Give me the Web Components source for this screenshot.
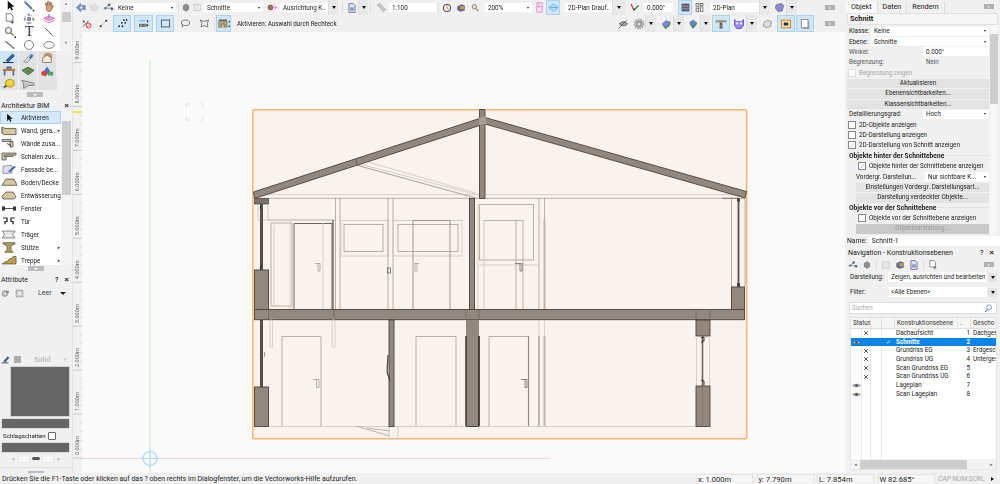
<!DOCTYPE html>
<html lang="de">
<head>
<meta charset="utf-8">
<title>Vectorworks</title>
<style>
    html, body { margin: 0; height: 484px; overflow: hidden; background: #f0f0f0; }
    body { font: 6.3px Roboto, "Liberation Sans", sans-serif; color: #222; }
</style>
</head>
<body>
<vw-app></vw-app>
<script>
// small toolbar / palette pictures, all on a 16x16 box
const ICONS = {
    cursor: '<path d="M5 1v12l3-3 2 4 2-1-2-4h4z" fill="#111"/>',
    wand: '<path d="M2 2l10 10" stroke="#5a7f9a" stroke-width="3"/><path d="M2 1l2 2" stroke="#9cd" stroke-width="3"/><rect x="13" y="13" width="2" height="2" fill="#111"/>',
    hand: '<path d="M4 8l-1-4 2 0 1 3 0-5 2 0 1 5 1-4 2 1-1 5 2-2 1 1-3 6-3 2-3-2z" fill="#d8a070" stroke="#74513a" stroke-width=".8"/>',
    docplus: '<path d="M3 1h6l3 3v7H3z" fill="#fff" stroke="#555"/><path d="M11 10v5M8.500 12.500h5" stroke="#444"/>',
    sphere: '<circle cx="8" cy="8" r="3" fill="#7c8ba0"/><path d="M8 1v3M8 12v3M1 8h3M12 8h3" stroke="#556" stroke-width="1.500"/><circle cx="8" cy="8" r="6" fill="none" stroke="#778" stroke-dasharray="3 2"/>',
    pinkstack: '<path d="M1 7l7-3 7 3-7 3z" fill="#f6a6d8" stroke="#e050b0"/><path d="M1 10l7 3 7-3" fill="none" stroke="#e050b0"/><path d="M8 1v6" stroke="#3a9" stroke-width="1.500"/>',
    mag: '<circle cx="6" cy="6" r="4" fill="#eee" stroke="#777" stroke-width="1.500"/><path d="M9 9l4 4" stroke="#a08040" stroke-width="2"/><rect x="14" y="14" width="2" height="2" fill="#111"/>',
    line: '<path d="M3 3l10 10" stroke="#555" stroke-width="1.200"/>',
    dline: '<path d="M2 3l12 10" stroke="#777" stroke-width="2"/>',
    circle: '<circle cx="8" cy="8" r="6" fill="none" stroke="#555"/>',
    ellipse: '<ellipse cx="8" cy="8" rx="7" ry="4.500" fill="none" stroke="#555"/>',
    pen: '<path d="M1 14h12" stroke="#234" stroke-width="1.500"/><path d="M5 11l7-8 2 2-7 8z" fill="#2a6fd0" stroke="#123"/>',
    eraser: '<path d="M3 13L11 3l3 2-7 9z" fill="#ddd" stroke="#888"/><path d="M9 8l3-5 2 1-3 5z" fill="#2a6fd0"/>',
    house: '<circle cx="9" cy="6" r="5" fill="#c8955c"/><path d="M3 8l5-4 5 4v6H3z" fill="#f2ead8" stroke="#777"/>',
    table: '<path d="M1 5h14v3H1z" fill="#b87840"/><path d="M3 8v6M13 8v6" stroke="#4a6fa8" stroke-width="2"/><rect x="5" y="2" width="6" height="3" fill="#4a6fa8"/>',
    plants: '<path d="M1 7l7-4 7 4-7 6z" fill="#5c9a50" stroke="#365"/><path d="M5 5l6 6M9 4l3 4" stroke="#b04030"/>',
    shapes: '<path d="M8 2l5 9H3z" fill="#3a70d0"/><circle cx="5" cy="11" r="3.500" fill="#d04040"/><rect x="9" y="9" width="6" height="5" fill="#40a860"/>',
    bulb: '<ellipse cx="9" cy="7" rx="5" ry="5" fill="#f4d030" stroke="#96801c"/><path d="M5 10l-3 3" stroke="#666" stroke-width="2.500"/>',
    beam: '<path d="M1 3l14 4v3H8l-5 4V8z" fill="#c8c8c8" stroke="#777"/>',
    back: '<path d="M8 2L2 8l6 6 1-3h6V5H9z" fill="#7c8ed0" stroke="#6070a8" stroke-width=".8"/><circle cx="9" cy="8" r="2" fill="#dde"/>',
    fwd: '<path d="M8 2l6 6-6 6-1-3H2V5h5z" fill="#e2e2e2" stroke="#ccc"/>',
    classes: '<circle cx="3" cy="9" r="1.800" fill="#789"/><circle cx="9" cy="4" r="2" fill="#567"/><circle cx="13" cy="10" r="2" fill="#567"/><path d="M3 9l6-5M3 9h10" stroke="#567"/>',
    hex: '<path d="M8 2l5 3v6l-5 3-5-3V5z" fill="#8c8c8c"/>',
    box: '<rect x="2" y="3" width="11" height="10" fill="#e9e9e9" stroke="#bbb"/>',
    align: '<circle cx="5" cy="8" r="3.500" fill="#a87850" stroke="#543"/><path d="M8 8h7M9 4l5 4-5 4" fill="none" stroke="#f070c0"/>',
    doc: '<path d="M3 1h7l3 3v11H3z" fill="#dfe3f6" stroke="#445"/><rect x="5" y="7" width="6" height="5" fill="#8890d8"/>',
    ruler: '<path d="M2 4l3-2 9 9-3 3z" fill="#ccc" stroke="#999"/>',
    clock: '<circle cx="8" cy="8" r="6" fill="#eee" stroke="#333" stroke-width="1.400"/><path d="M8 4v4l3 2" stroke="#a06020" fill="none"/>',
    views: '<path d="M2 5l7-3 5 2v8l-7 2-5-3z" fill="#606a90"/><path d="M7 5h6v5H7z" fill="#c8a040"/>',
    zoom: '<circle cx="7" cy="6" r="3.500" fill="#ddd" stroke="#777" stroke-width="1.300"/><path d="M9.500 9l4 4" stroke="#a08040" stroke-width="2"/>',
    pinkbox: '<path d="M4 1h8v14H4z" fill="#fbe8f6" stroke="#ec68c8"/><path d="M4 7h8M7 1v6" stroke="#ec68c8"/>',
    bluelayer: '<path d="M1 8l7-5 7 5-7 5z" fill="#b8e0f8" stroke="#40a0e0"/><path d="M3 8h10" stroke="#40a0e0"/>',
    axes: '<path d="M3 3l4 9" stroke="#d03030" stroke-width="1.600"/><path d="M7 12l7-7" stroke="#207020" stroke-width="1.600"/><path d="M7 12V9" stroke="#3040c0" stroke-width="1.600"/>',
    grid2: '<rect x="3" y="3" width="10" height="10" fill="#667" stroke="#334"/><path d="M3 6h10M3 10h10" stroke="#aab"/>',
    layout: '<rect x="3" y="2" width="4" height="5" fill="#eee" stroke="#555"/><rect x="9" y="2" width="4" height="3" fill="#eee" stroke="#555"/><rect x="3" y="9" width="4" height="5" fill="#eee" stroke="#555"/><rect x="9" y="7" width="4" height="7" fill="#eee" stroke="#555"/>',
    shield: '<path d="M3 4l8-2 3 3-2 8-6 1-4-5z" fill="#8a8ad8" stroke="#667"/>',
    snapx: '<path d="M3 12L8 7l3-3" stroke="#555" stroke-width="1.400"/><circle cx="4" cy="5" r="1.500" fill="#444"/><circle cx="11" cy="11" r="3.500" fill="none" stroke="#d03030" stroke-width="1.300"/><path d="M9 13l4-4" stroke="#d03030"/>',
    snap2: '<circle cx="4" cy="12" r="1.500" fill="#222"/><circle cx="12" cy="4" r="1.500" fill="#222"/><path d="M4 12l8-8" stroke="#777" stroke-dasharray="2 1"/>',
    snap3: '<g fill="#222"><circle cx="3" cy="12" r="1.300"/><circle cx="8" cy="12" r="1.300"/><circle cx="7" cy="7" r="1.300"/><circle cx="12" cy="7" r="1.300"/><circle cx="10" cy="3" r="1.300"/><circle cx="14" cy="3" r="1.300"/></g>',
    snap4: '<path d="M2 4h9M2 12h9" stroke="#3a8fd0"/><rect x="2" y="9" width="5" height="3" fill="#b8a068" stroke="#555"/><rect x="8" y="9" width="4" height="3" fill="#b8a068" stroke="#555"/><path d="M14 3v3M14 9v3" stroke="#222" stroke-width="1.500"/>',
    rect: '<rect x="2" y="3" width="12" height="10" fill="none" stroke="#444" stroke-width="1.200"/>',
    lasso: '<ellipse cx="8" cy="7" rx="6" ry="4" fill="none" stroke="#444"/><path d="M4 10l-1 4" stroke="#444"/>',
    poly: '<path d="M2 3l5 2 7-2-2 5 1 5-6-2-4 2 1-5z" fill="none" stroke="#444"/>',
    section: '<path d="M1 13V5h11v8M4 13V8h5v5" fill="#c8b080" stroke="#665"/><path d="M1 3h11" stroke="#665" stroke-width="2"/><path d="M15 4v2M15 10v2" stroke="#222" stroke-width="1.500"/>',
    hiddenline: '<path d="M2 14L13 3M3 8c3-4 8-4 11 0-3 3-8 3-11 0z" fill="#aaa" stroke="#444"/>',
    gear: '<circle cx="8" cy="8" r="5" fill="#999"/><circle cx="8" cy="8" r="6.300" fill="none" stroke="#999" stroke-width="1.800" stroke-dasharray="2 1.400"/><circle cx="8" cy="8" r="2" fill="#ddd"/>',
    shieldg: '<path d="M2 8l6-5 6 2-1 6-6 3z" fill="#7b86d8"/><path d="M5 11l3 3 6-8" fill="none" stroke="#3a9a3a" stroke-width="1.500"/>',
    gem: '<path d="M3 6l5-4 5 4-1 3-4 5-4-5z" fill="#6a7fd0"/><path d="M6 10l2 3 5-6" fill="none" stroke="#2f9a3a" stroke-width="1.600"/>',
    figure: '<rect x="1" y="3" width="14" height="3" fill="#a89060"/><circle cx="8" cy="8" r="2" fill="#555"/><path d="M6 14v-4h4v4" fill="#666"/>',
    owl: '<path d="M2 2l3 3h6l3-3v8l-3 4H5l-3-4z" fill="#9a8cf0" stroke="#5040d0"/><circle cx="5.500" cy="7" r="1.500" fill="#fff"/><circle cx="10.500" cy="7" r="1.500" fill="#fff"/>',
    teapot: '<path d="M3 11l1-5 5-3 5 2-1 6-5 2z" fill="#ddd" stroke="#888"/>',
    shot: '<rect x="2" y="3" width="12" height="10" fill="#f4e8c8" stroke="#d89020" stroke-width="1.500"/><rect x="5" y="6" width="6" height="4" fill="#333"/>',
    page: '<rect x="3" y="2" width="9" height="11" fill="#fff" stroke="#777"/><path d="M13 4v10H5" fill="none" stroke="#999" stroke-width="1.500"/>',
    eye: '<path d="M1 8c3-4 11-4 14 0-3 4-11 4-14 0z" fill="#cfd6d8" stroke="#445"/><circle cx="8" cy="8" r="2.500" fill="#334"/>',
    cross: '<path d="M3 3l10 10M13 3L3 13" stroke="#222" stroke-width="2"/>',
    check: '<path d="M3 9l3 4 7-10" fill="none" stroke="#8ac" stroke-width="1.500"/>',
    search: '<circle cx="9" cy="6" r="4.500" fill="none" stroke="#4a80c0" stroke-width="1.300"/><path d="M6 10l-4 4" stroke="#4a80c0" stroke-width="1.800"/>',
    attrs: '<circle cx="7" cy="8" r="5" fill="#ccc" stroke="#555"/><rect x="9" y="3" width="5" height="4" fill="#888"/>',
    square: '<rect x="2" y="2" width="12" height="12" fill="#f4f4f4" stroke="#666"/><rect x="5" y="5" width="6" height="6" fill="none" stroke="#999"/>',
    wall: '<path d="M1 3l3 2h11v9H3L1 12z" fill="#d8c79c" stroke="#555"/><path d="M1 3v9" stroke="#777"/>',
    walladd: '<path d="M1 2h9v3H1z" fill="#ccc" stroke="#555"/><path d="M9 5h3v8H9z" fill="#d8c79c" stroke="#555"/><path d="M6 8l4 3" stroke="#222"/>',
    shell: '<path d="M1 3h14v3H5v7H1z" fill="#d8c79c" stroke="#555"/><path d="M3 6h9v2H3z" fill="#fff" stroke="#555"/>',
    facade: '<path d="M2 3l9-1v11l-9 1z" fill="#dfe0f8" stroke="#888"/><path d="M7 11l6-8 2 1-6 8z" fill="#3a5fd0"/>',
    slab: '<path d="M5 3h8l3 9H1z" fill="#d8c79c" stroke="#555"/>',
    drain: '<path d="M5 3h7l3 7-2 3H2l-1-4z" fill="#d8c79c" stroke="#555"/>',
    window: '<rect x="1" y="5" width="3" height="6" fill="#333"/><rect x="12" y="5" width="3" height="6" fill="#333"/><path d="M4 8h8" stroke="#333"/>',
    door: '<path d="M2 3h4v5H4v4M14 3h-4v5h2v4" fill="none" stroke="#333" stroke-width="1.400"/>',
    girder: '<path d="M1 3h13v1l-2 2v4l2 2v1H1l2-3V6z" fill="#e8e8e8" stroke="#777"/>',
    column: '<path d="M2 1h12v2l-4 2v7l2 2v1H4v-1l2-2V5L2 3z" fill="#b89a50" stroke="#665"/>',
    stair: '<path d="M1 13l3-3 3-1 1-3 3-1 1-3h3v11z" fill="#c0a040" stroke="#654"/>'
};

function icon(name, size, w) {
    return `<svg width="${w || size}" height="${size}" viewBox="0 0 16 16" preserveAspectRatio="none" style="display:block">${ICONS[name]}</svg>`;
}

// one toolbar cell: w is the width of the cell, the icon sits in the middle
class VwTool extends HTMLElement {
    connectedCallback() {
        const w = this.getAttribute('w') || 14;
        const size = this.getAttribute('size') || 11;
        this.attachShadow({ mode: 'open' });
        this.shadowRoot.innerHTML = `
            <style>
                :host { display: flex; align-items: center; justify-content: center; width: ${w}px; height: 100%; box-sizing: border-box; flex: none; }
                :host([on]) { background: #cfe6f7; border: 1px solid #a9d3f1; }
                :host([drop]) { background: #e8e8e8; border-left: 1px solid #ddd; }
                i { width: 0; height: 0; border: 2px solid transparent; border-top: 3px solid #111; border-bottom: 0; }
            </style>
            ${this.hasAttribute('drop') ? '<i></i>' : icon(this.getAttribute('name'), size)}`;
    }
}

class VwCombo extends HTMLElement {
    connectedCallback() {
        const w = this.getAttribute('w');
        const inner = this.hasAttribute('inner');
        this.attachShadow({ mode: 'open' });
        this.shadowRoot.innerHTML = `
            <style>
                :host { display: flex; align-items: center; flex: none; box-sizing: border-box; width: ${w ? w + 'px' : 'auto'}; height: 9px; background: #fff; padding: 0 2px 0 3px; white-space: nowrap; overflow: hidden; }
                span { flex: 1; overflow: hidden; }
                i { width: 0; height: 0; border: 1.500px solid transparent; border-top: 2px solid #222; border-bottom: 0; margin-right: 1px; }
            </style>
            <span><slot></slot></span>${inner ? '<i></i>' : ''}`;
    }
}

class VwGap extends HTMLElement {
    connectedCallback() {
        this.attachShadow({ mode: 'open' });
        this.shadowRoot.innerHTML = `
            <style>
                :host { display: block; flex: none; width: ${this.getAttribute('w') || 1}px; height: 100%; }
                b { display: block; width: 1px; margin: 2px auto; height: calc(100% - 4px); background: #dcdcdc; }
            </style>
            ${this.hasAttribute('sep') ? '<b></b>' : ''}`;
    }
}

class VwMore extends HTMLElement {
    connectedCallback() {
        this.attachShadow({ mode: 'open' });
        this.shadowRoot.innerHTML = `
            <style>
                :host { display: flex; align-items: center; justify-content: center; flex: none; width: 10px; height: 5px; background: #b0b0b0; }
                i { width: 0; height: 0; border: 1.500px solid transparent; border-left: 2px solid #fff; border-right: 0; }
            </style><i></i>`;
    }
}

class VwToolbar extends HTMLElement {
    connectedCallback() {
        this.attachShadow({ mode: 'open' });
        this.shadowRoot.innerHTML = `
            <style>
                :host { display: flex; align-items: center; height: ${this.getAttribute('h') || 15}px; background: #f0f0f0; flex: none; }
            </style>
            <slot></slot>`;
    }
}

class VwTitle extends HTMLElement {
    connectedCallback() {
        this.attachShadow({ mode: 'open' });
        this.shadowRoot.innerHTML = `
            <style>
                :host { display: flex; align-items: center; height: 11px; padding: 0 3px 0 1px; background: #f0f0f0; font-size: 7px; flex: none; white-space: nowrap; }
                span { flex: 1; }
                b { font: bold 8px "Liberation Sans", sans-serif; margin-left: 6px; }
                u { text-decoration: none; font-size: 7px; font-weight: 500; }
            </style>
            <span><slot></slot></span>${this.hasAttribute('help') ? '<u>?</u>' : ''}<b>×</b>`;
    }
}

class VwCheck extends HTMLElement {
    connectedCallback() {
        this.attachShadow({ mode: 'open' });
        this.shadowRoot.innerHTML = `
            <style>
                :host { display: flex; align-items: center; gap: 3px; white-space: nowrap; }
                :host([off]) { color: #a8a8a8; }
                i { width: 6px; height: 6px; background: #fff; border: 1px solid #888; display: block; flex: none; line-height: 0; }
                :host([off]) i { border-color: #ddd; }
                svg { display: block; }
            </style>
            <i>${this.hasAttribute('checked') ? icon('check', 6) : ''}</i><span><slot></slot></span>`;
    }
}

class VwPButton extends HTMLElement {
    connectedCallback() {
        this.attachShadow({ mode: 'open' });
        this.shadowRoot.innerHTML = `
            <style>
                :host { display: block; height: 9.400px; line-height: 9.400px; text-align: center; background: #e3e3e3; margin-top: 1px; white-space: nowrap; }
                :host([off]) { background: #c9c9c9; color: #999; }
            </style>
            <slot></slot>`;
    }
}

// left column: tools, sets, architecture list and attributes
class VwPalette extends HTMLElement {
    connectedCallback() {
        const tools = ['cursor', 'wand', 'hand', 'docplus', 'sphere', 'pinkstack', 'mag', 'T', 'line', 'dline', 'circle', 'ellipse'];
        const sets = ['pen', 'eraser', 'house', 'table', 'plants', 'shapes', 'bulb', 'beam'];
        this.attachShadow({ mode: 'open' });
        this.shadowRoot.innerHTML = `
            <style>
                :host { display: flex; height: 100px; flex: none; flex-direction: column; background: #f0f0f0; }
                .top { display: flex; height: 51px; flex: none; background: #fff; overflow: hidden; }
                .tools { width: 60px; display: grid; grid-template-columns: repeat(3, 19.500px); grid-auto-rows: 13px; margin-top: -1px; }
                .tools div { display: flex; align-items: center; justify-content: center; }
                .tools b { font: 14px/13px "Liberation Serif", serif; color: #333; }
                .scroll { width: 12px; background: #f2f2f2; display: flex; flex-direction: column; align-items: center; }
                .thumb { width: 9px; height: 10px; background: #cdcdcd; margin: 6px 0 17px; }
                .ar { font-size: 4px; line-height: 4px; color: #777; margin-top: 2px; }
                .sets { display: grid; grid-template-columns: repeat(3, 19px); grid-auto-rows: 13px; background: #e2e2e2; height: 39px; flex: none; width: 57px; }
                .sets div { display: flex; align-items: center; justify-content: center; border-right: 1px solid #f0f0f0; box-sizing: border-box; }
                .sets div:first-child { background: #cfe6f7; }
                .down { display: flex; justify-content: center; width: 70px; margin-top: 2px; }
                .down i { display: flex; justify-content: center; align-items: center; width: 16px; height: 5px; background: #bcbcbc; }
                .down i::after { content: ''; border: 2px solid transparent; border-top: 2px solid #fff; border-bottom: 0; }
            </style>
            <div class="top">
                <div class="tools">${tools.map(t => `<div>${t === 'T' ? '<b>T</b>' : icon(t, 12)}</div>`).join('')}</div>
                <div class="scroll"><span class="ar">▲</span><div class="thumb"></div><span class="ar">▼</span></div>
            </div>
            <div class="sets">${sets.map(s => `<div>${icon(s, 12, 14)}</div>`).join('')}</div>
            <div class="down"><i></i></div>`;
    }
}

class VwToolList extends HTMLElement {
    connectedCallback() {
        const items = [['cursor', 'Aktivieren'], ['wall', 'Wand, gera...', 1], ['walladd', 'Wände zusa...'], ['shell', 'Schalen zus...'],
            ['facade', 'Fassade be...'], ['slab', 'Boden/Decke'], ['drain', 'Entwässerung'], ['window', 'Fenster'], ['door', 'Tür'],
            ['girder', 'Träger'], ['column', 'Stütze', 1], ['stair', 'Treppe', 1]];
        this.attachShadow({ mode: 'open' });
        this.shadowRoot.innerHTML = `
            <style>
                :host { display: flex; flex: none; flex-direction: column; height: 173px; background: #f0f0f0; }
                .body { display: flex; height: 154px; flex: none; overflow: hidden; background: #fff; }
                .list { width: 61px; flex: none; }
                .row { display: flex; align-items: center; height: 13px; white-space: nowrap; position: relative; box-sizing: border-box; }
                .row svg { margin: 0 4px 0 1px; flex: none; }
                .row:first-child { background: #d4eafa; outline: 1px solid #a9d3f1; outline-offset: -1px; }
                .row:first-child svg { margin-left: 4px; margin-right: 7px; }
                .row em { position: absolute; right: 0; font-style: normal; font-size: 4px; }
                .scroll { flex: 1; background: #f4f4f4; padding-top: 10px; }
                .thumb { width: 9px; height: 74px; background: #cdcdcd; margin-left: 1px; }
                .down { display: flex; justify-content: center; margin-top: 1px; width: 72px; }
                .down i { display: flex; justify-content: center; align-items: center; width: 16px; height: 5px; background: #bcbcbc; }
                .down i::after { content: ''; border: 2px solid transparent; border-top: 2px solid #fff; border-bottom: 0; }
            </style>
            <vw-title>Architektur BIM</vw-title>
            <div class="body">
                <div class="list">${items.map(([ic, label, more], n) => `<div class="row">${n ? icon(ic, 11, 16) : icon(ic, 10)}<span>${label}</span>${more ? '<em>►</em>' : ''}</div>`).join('')}</div>
                <div class="scroll"><div class="thumb"></div></div>
            </div>
            <div class="down"><i></i></div>`;
    }
}

class VwAttributes extends HTMLElement {
    connectedCallback() {
        this.attachShadow({ mode: 'open' });
        this.shadowRoot.innerHTML = `
            <style>
                :host { display: flex; flex-direction: column; flex: 1; min-height: 0; background: #f0f0f0; padding-top: 1px; }
                .fill { display: flex; align-items: center; height: 12px; flex: none; margin-top: 2px; padding-left: 1px; gap: 5px; }
                .fill span { margin-left: 9px; font-size: 7px; color: #444; flex: 1; }
                .fill i { border: 3px solid transparent; border-top: 3px solid #222; border-bottom: 0; margin-right: 6px; }
                .solid { display: flex; flex: none; align-items: center; height: 10px; margin-top: 55px; padding-left: 1px; gap: 4px; color: #bbb; font-weight: 700; font-size: 7.300px; }
                .solid b { width: 7px; height: 7px; background: #aaa; }
                .solid span { margin-left: 9px; flex: 1; }
                .solid em { font-size: 4px; margin-right: 5px; font-style: normal; }
                .hatch { height: 49px; width: 58px; flex: none; background: #666; margin: 3px 0 0 11px; outline: 1px solid #d0d0d0; }
                .bar { height: 9px; width: 67px; flex: none; background: #666; margin: 3px 0 0 2px; outline: 1px solid #ddd; }
                .shadow { display: flex; flex: none; align-items: center; gap: 2px; padding-left: 3px; height: 11px; margin-top: 2px; font-size: 6.200px; white-space: nowrap; }
                .shadow i { width: 6px; height: 6px; background: #fff; border: 1px solid #666; border-radius: 1px; }
                .link { display: flex; flex: none; justify-content: center; align-items: center; height: 9px; margin-top: 2px; gap: 2px; color: #bbb; font-size: 5px; }
                .link u { width: 12px; height: 9px; background: #f6f6f6; border: 1px solid #e6e6e6; box-sizing: border-box; }
                .link b { width: 8px; height: 3px; border-radius: 2px; background: #555; }
                .down { display: flex; flex: none; justify-content: center; margin-top: 4px; border-top: 1px solid #e0e0e0; padding-top: 3px; }
                .down i { display: flex; justify-content: center; align-items: center; width: 16px; height: 5px; background: #bcbcbc; }
                .down i::after { content: ''; border: 2px solid transparent; border-top: 2px solid #fff; border-bottom: 0; }
            </style>
            <vw-title help>Attribute</vw-title>
            <div class="fill">${icon('attrs', 9)}${icon('square', 9)}<span>Leer</span><i></i></div>
            <div class="solid">${icon('pen', 9)}<b></b><span>Solid</span><em>▼</em></div>
            <div class="hatch"></div>
            <div class="bar"></div>
            <div class="shadow">Schlagschatten <i></i></div>
            <div class="bar" style="margin-top:2px"></div>
            <div class="link"><span>▼</span><u></u><b></b><u></u><span>▼</span></div>
            <div class="down"><i></i></div>`;
    }
}

class VwRuler extends HTMLElement {
    connectedCallback() {
        let marks = '';
        for (let m = 0; m <= 9; m++) {
            const y = 458 - m * 43.95;
            marks += `<path d="M73 ${y}h9" stroke="#bbb" stroke-width=".8"/>`;
            marks += `<text transform="translate(79 ${y - 3}) rotate(-90)" font-size="5.600" fill="#666" font-family="Roboto">${m}.000m</text>`;
            for (let t = 1; t < 5; t++) marks += `<path d="M80 ${y - t * 8.79}h2" stroke="#ccc" stroke-width=".6"/>`;
        }
        this.attachShadow({ mode: 'open' });
        this.shadowRoot.innerHTML = `
            <style>:host { display: block; width: 9px; flex: none; background: #f2f2f2; } svg { display: block; }</style>
            <svg width="9" height="441" viewBox="73 32 9 441">${marks}<rect x="73" y="111" width="9" height="2" fill="#f4e04a"/></svg>`;
    }
}

// the section drawing lies on the page's own pixel grid
class VwDrawing extends HTMLElement {
    connectedCallback() {
        const wall = 'fill="#93887f" stroke="#4a423c" stroke-width=".9"';
        const thin = 'fill="none" stroke="#a79e97" stroke-width=".8"';
        const faint = 'fill="none" stroke="#d3cbc5" stroke-width=".9"';
        const dark = 'fill="none" stroke="#6f6660" stroke-width=".8"';
        this.attachShadow({ mode: 'open' });
        this.shadowRoot.innerHTML = `
            <style>:host { display: block; flex: 1; background: #fafafa; overflow: hidden; } svg { display: block; }</style>
            <svg width="764" height="441" viewBox="82 32 764 441">
                <path d="M150 60V473" stroke="#bff0bf" stroke-width="1"/>
                <path d="M82 458.500H550" stroke="#f5c8c8" stroke-width=".8"/>
                <circle cx="150" cy="458.500" r="7" fill="none" stroke="#a9d8f8" stroke-width="1.200"/>
                <path d="M150 449v19M141 458.500h18" stroke="#a9d8f8" stroke-width=".8"/>
                <path d="M186 108v-4h4M199 104h4v4M186 116v4h4M199 120h4v-4" fill="none" stroke="#e2e2e2"/>

                <rect x="252.800" y="109.800" width="493.900" height="329" rx="1" fill="#faf2ed" stroke="#fbb56e" stroke-width="1.500"/>

                <path d="M254 194.500H745" stroke="#d9d1cb" stroke-width="1"/>
                <path d="M254 198.300H745" stroke="#a79e97" stroke-width=".8"/>
                <path d="M356 165L476 198M356 163L478 195M368 162L476 193" ${faint}/>
                <path d="M356 165L476 198" ${thin}/>

                <path d="M258 198v22H268V198" ${faint}/>
                <path d="M268 220H335M271 223H292V306H271z" ${thin}/>
                <path d="M290 220V309M274 225V305" ${faint}/>
                <path d="M294 309V223.500H332V309" fill="none" stroke="#5a524c" stroke-width=".9"/>
                <path d="M323 223V309" ${faint} stroke-width="1.500"/>
                <path d="M333 220V309" fill="none" stroke="#6f6660" stroke-width="1.400"/>
                <path d="M335.500 198V309M340 198V309" ${thin}/>
                <rect x="341" y="220.500" width="47" height="35.500" ${faint}/>
                <rect x="344" y="224.500" width="39" height="27" ${thin}/>
                <path d="M388 198V309M393 198V309" ${thin}/>
                <rect x="387.500" y="268" width="3" height="5" ${dark}/>
                <rect x="393" y="220.500" width="69" height="35.500" ${faint}/>
                <rect x="398" y="224.500" width="60" height="27" ${thin}/>
                <path d="M413 309V220.500H450V309" fill="none" stroke="#8d847d" stroke-width=".8"/>
                <path d="M315 263.500h5M320 263v8h-2v-8M414 263.500h5M417 263v8h-2v-8" ${thin}/>
                <rect x="479.500" y="204.500" width="54" height="55.500" ${thin}/>
                <path d="M479 265H539M484 220V309M478 204V309" ${faint}/>
                <path d="M484 220.500H523V309M516 220.500V309" ${thin}/>
                <path d="M515 263.500h6M522 263v8h-2v-8" ${dark}/>
                <path d="M539 198V309" ${thin}/>
                <path d="M544.500 198V220" ${thin}/>
                <path d="M544.500 220V309" fill="none" stroke="#bdb5ae" stroke-width="2"/>
                <path d="M731.500 198V287M745 198V287" ${thin}/>
                <path d="M722 198.300H738" ${dark}/>

                <path d="M253.500 192L481 118V125L254.500 198.500Z" ${wall}/>
                <path d="M356 158.500L357 164" stroke="#4a423c" stroke-width=".6"/>
                <path d="M485 117.500L746.500 191.500L745 198L485 124Z" ${wall}/>
                <path d="M479.500 109.500H485V198.500H479.500Z" ${wall}/>
                <path d="M479 118L486 116V124L479 125Z" fill="#a89e95"/>

                <rect x="254.500" y="198.500" width="14" height="5.500" fill="#7b716a" stroke="#4a423c" stroke-width=".7"/>
                <path d="M261.500 204V270" stroke="#56504a" stroke-width="3"/>
                <path d="M262 205c-2 1-2 3-1 4M262 265c-2 1-2 3-1 4" fill="none" stroke="#222" stroke-width=".9"/>
                <rect x="254.500" y="270" width="14" height="39.500" ${wall}/>
                <rect x="469.500" y="198.500" width="5" height="111" ${wall}/>
                <path d="M738.500 198V287" stroke="#5a524c" stroke-width="1.800"/>
                <rect x="737" y="198.500" width="3" height="3" fill="#4a423c"/>
                <rect x="737" y="283" width="3" height="4" fill="#4a423c"/>
                <rect x="731.500" y="287" width="13" height="22.500" ${wall}/>
                <rect x="254.500" y="309.500" width="490" height="10.200" ${wall}/>
                <path d="M268.500 309.500V320M334 309.500V320M466 309.500V320M479 309.500V320M696 309.500V320M710 309.500V320" stroke="#6a615a" stroke-width=".7"/>

                <path d="M254 426.500H696" stroke="#d6cec8" stroke-width="1.100"/>
                <path d="M356 426L390 436M367 428L390 431" ${thin}/>
                <rect x="389" y="426.500" width="9" height="12.500" ${faint}/>
                <path d="M270 320H272.500V347H270zM332 320H335V347H332z" ${faint}/>
                <path d="M282 426V336.500H321V426" ${thin}/>
                <path d="M313 379.500h6v8h-2.500v-8" ${thin}/>
                <rect x="260" y="320" width="3" height="67" fill="#56504a"/>
                <path d="M264 352c1 1 1 3 0 5" ${dark}/>
                <rect x="254.500" y="387" width="14" height="39.500" ${wall}/>
                <rect x="389" y="320" width="5" height="106.500" ${wall}/>
                <path d="M388 355L387 372L390 381" fill="none" stroke="#444" stroke-width="1.200"/>
                <path d="M416 426V336.500H456V426" ${thin}/>
                <rect x="466" y="320" width="13" height="106.500" fill="#93887f"/>
                <path d="M466 336V426" stroke="#3e3631" stroke-width="1.500"/>
                <path d="M479 336V426" stroke="#3e3631" stroke-width="1.800"/>
                <path d="M466 426.500H479" stroke="#4a423c"/>
                <path d="M489 426V336.500H528.500V426" ${thin}/>
                <path d="M528.500 336V426" stroke="#8d847d" stroke-width="1.100"/>
                <path d="M521 379.500h6v8h-2v-8" ${dark}/>
                <path d="M539 320V336M544.500 320V336" ${faint}/>
                <path d="M539 336V426M544.500 336V426" fill="none" stroke="#bdb5ae" stroke-width="2"/>
                <rect x="696" y="320" width="14" height="16" ${wall}/>
                <path d="M696.500 336V386M709.500 336V386" ${faint}/>
                <path d="M702.500 336V386" stroke="#665e57" stroke-width="1.500"/>
                <path d="M701 338l3-1v4h-2v2M701 380l3 1v4" fill="none" stroke="#222" stroke-width=".9"/>
                <rect x="696" y="386" width="14" height="40.500" ${wall}/>
                <path d="M702.500 386V426" stroke="#6f6660" stroke-width=".6"/>
            </svg>`;
    }
}

class VwObjectInfo extends HTMLElement {
    connectedCallback() {
        this.attachShadow({ mode: 'open' });
        this.shadowRoot.innerHTML = `
            <style>
                :host { display: flex; flex: none; flex-direction: column; height: 247px; background: #f0f0f0; }
                .tabs { display: flex; flex: none; align-items: flex-end; height: 13px; padding-left: 1px; font-size: 7.200px; }
                .tabs span { padding: 0 5px 1px; border-right: 1px solid #ddd; height: 10px; line-height: 10px; }
                .tabs span:first-child { background: #f8f8f8; }
                .tabs vw-more { margin: 0 6px 0 auto; align-self: center; }
                .head { height: 10px; flex: none; line-height: 10px; margin: 0 2px; padding-left: 2px; font-weight: 700; font-size: 7.300px; background: #f6f6f6; border: 1px solid #e2e2e2; }
                .wrap { display: flex; flex: 1; min-height: 0; }
                .rows { width: 142px; margin-left: 2px; padding-top: 1px; }
                .row { display: flex; align-items: center; height: 10.400px; padding-left: 2px; white-space: nowrap; }
                .row label { flex: none; }
                .row vw-combo { margin-left: auto; }
                .row > vw-check { margin-left: -1px; }
                .ind2 { padding-left: 9px; }
                .ind2 > vw-check { margin-left: 2px; }
                .h { font-weight: 700; gap: 3px; font-size: 6.700px; }
                .h::after { content: ''; flex: 1; height: 1px; background: #e2e2e2; }
                .dim { color: #555; }
                .scroll { width: 8px; margin-left: 1px; background: #f6f6f6; padding-top: 9px; }
                .scroll div { height: 70px; background: #cdcdcd; }
                .name { display: flex; align-items: center; height: 11px; flex: none; padding: 0 0 0 2px; margin-bottom: 1px; gap: 2px; font-size: 6.800px; }
                .name vw-combo { flex: 1; height: 10px; }
            </style>
            <div class="tabs"><span>Objekt</span><span>Daten</span><span>Rendern</span><vw-more></vw-more></div>
            <div class="head">Schnitt</div>
            <div class="wrap">
                <div class="rows">
                    <div class="row"><label>Klasse:</label><vw-combo w="118" inner>Keine</vw-combo></div>
                    <div class="row"><label>Ebene:</label><vw-combo w="118" inner>Schnitte</vw-combo></div>
                    <div class="row dim"><label>Winkel:</label><vw-combo w="66" style="color:#222">0.000°</vw-combo></div>
                    <div class="row dim"><label>Begrenzung:</label><span style="margin-left:auto;width:63px">Nein</span></div>
                    <div class="row"><vw-check off>Begrenzung zeigen</vw-check></div>
                    <vw-pbutton>Aktualisieren</vw-pbutton>
                    <vw-pbutton>Ebenensichtbarkeiten...</vw-pbutton>
                    <vw-pbutton>Klassensichtbarkeiten...</vw-pbutton>
                    <div class="row"><label>Detaillierungsgrad:</label><vw-combo w="66" inner>Hoch</vw-combo></div>
                    <div class="row"><vw-check>2D-Objekte anzeigen</vw-check></div>
                    <div class="row"><vw-check>2D-Darstellung anzeigen</vw-check></div>
                    <div class="row"><vw-check checked>2D-Darstellung von Schnitt anzeigen</vw-check></div>
                    <div class="row h">Objekte hinter der Schnittebene</div>
                    <div class="row ind2"><vw-check checked>Objekte hinter der Schnittebene anzeigen</vw-check></div>
                    <div class="row ind2"><label>Vordergr. Darstellun...</label><vw-combo w="64" inner>Nur sichtbare K...</vw-combo></div>
                    <vw-pbutton style="margin-left:9px">Einstellungen Vordergr. Darstellungsart...</vw-pbutton>
                    <vw-pbutton style="margin-left:9px">Darstellung verdeckter Objekte...</vw-pbutton>
                    <div class="row h">Objekte vor der Schnittebene</div>
                    <div class="row ind2"><vw-check>Objekte vor der Schnittebene anzeigen</vw-check></div>
                    <vw-pbutton off style="margin-left:9px">Objektdarstellung...</vw-pbutton>
                </div>
                <div class="scroll"><div></div></div>
            </div>
            <div class="name"><label>Name:</label><vw-combo>Schnitt-1</vw-combo></div>`;
    }
}

class VwNavigator extends HTMLElement {
    connectedCallback() {
        const rows = [['', 'x', '', 'Dachaufsicht', 1, 'Dachges'], ['eye', '', 'c', 'Schnitte', 2, ''], ['', 'x', '', 'Grundriss EG', 3, 'Erdgesch'],
            ['', 'x', '', 'Grundriss UG', 4, 'Unterges'], ['', 'x', '', 'Scan Grundriss EG', 5, ''], ['', 'x', '', 'Scan Grundriss UG', 6, ''],
            ['eye', '', '', 'Lageplan', 7, ''], ['eye', '', '', 'Scan Lageplan', 8, '']];
        const cols = '10px 10px 11px 13px 63px 13px 27px';
        this.attachShadow({ mode: 'open' });
        this.shadowRoot.innerHTML = `
            <style>
                :host { display: flex; flex-direction: column; flex: 1; min-height: 0; background: #f0f0f0; padding: 0 3px 0 2px; }
                .tbar { display: flex; flex: none; align-items: center; gap: 4px; height: 13px; padding-left: 1px; }
                .tbar vw-more { margin: 0 3px 0 auto; }
                .tbar u { width: 1px; height: 10px; background: #ddd; }
                .field { display: flex; flex: none; align-items: center; height: 10px; margin-top: 1px; white-space: nowrap; padding-left: 3px; }
                .field label { width: 38px; flex: none; }
                .field vw-combo { flex: 1; height: 10px; }
                .field b { width: 9px; height: 9px; margin-left: 1px; background: #e4e4e4; display: flex; align-items: center; justify-content: center; }
                .field b::after { content: ''; border: 2px solid transparent; border-top: 3px solid #111; border-bottom: 0; }
                .search { display: flex; flex: none; align-items: center; box-sizing: border-box; height: 12px; margin: 5px 0 3px 2px; background: #fff; border: 1px solid #ddd; color: #aaa; padding: 0 3px 0 2px; justify-content: space-between; }
                .table { flex: 1; min-height: 0; margin-left: 3px; margin-bottom: 3px; background: #fff; border: 1px solid #e4e4e4; display: flex; flex-direction: column; overflow: hidden; }
                .grid { display: grid; grid-template-columns: ${cols}; white-space: nowrap; }
                .hd { height: 11px; flex: none; line-height: 11px; background: #f5f5f5; border-bottom: 1px solid #e0e0e0; color: #333; box-sizing: border-box; }
                .hd span { border-right: 1px solid #e0e0e0; overflow: hidden; padding-left: 2px; }
                .hd .st { grid-column: span 2; }
                .rows { flex: 1; background: linear-gradient(#e8e8e8, #e8e8e8) 10px 0 / 1px 100% no-repeat, linear-gradient(#e8e8e8, #e8e8e8) 19px 0 / 1px 100% no-repeat, linear-gradient(#e8e8e8, #e8e8e8) 30px 0 / 1px 100% no-repeat; }
                .r { height: 8.700px; line-height: 8.700px; align-items: center; }
                .r div { display: flex; align-items: center; justify-content: center; height: 100%; overflow: hidden; }
                .r .n { justify-content: flex-start; padding-left: 1px; }
                .r .num { justify-content: flex-end; padding-right: 1px; }
                .r .g { justify-content: flex-start; padding-left: 2px; }
                .sel { background: #0a84e8; color: #fff; font-weight: 700; }
                .hs { display: flex; flex: none; align-items: center; height: 10px; background: #f2f2f2; font-size: 4px; color: #666; }
                .hs i { font-style: normal; width: 9px; text-align: center; }
                .hs b { width: 107px; height: 9px; background: #cdcdcd; }
                .hs span { flex: 1; }
            </style>
            <vw-title help>Navigation - Konstruktionsebenen</vw-title>
            <div class="tbar">${icon('classes', 10)}${icon('hex', 10)}<u></u>${icon('box', 10)}${icon('views', 10)}${icon('doc', 10)}<u></u>${icon('docplus', 10)}<vw-more></vw-more></div>
            <div class="field"><label>Darstellung:</label><vw-combo>Zeigen, ausrichten und bearbeiten</vw-combo><b></b></div>
            <div class="field" style="margin-top:5px"><label>Filter:</label><vw-combo>&lt;Alle Ebenen&gt;</vw-combo><b></b></div>
            <div class="search"><span>Suchen</span>${icon('search', 9)}</div>
            <div class="table">
                <div class="grid hd"><span class="st">Status</span><span></span><span></span><span>Konstruktionsebene</span><span>.</span><span style="border:0">Gescho</span></div>
                <div class="rows">${rows.map(([a, b, c, name, num, g]) => `
                    <div class="grid r${name === 'Schnitte' ? ' sel' : ''}">
                        <div>${a ? icon('eye', 7, 9) : ''}</div><div>${b ? icon('cross', 6) : ''}</div><div></div>
                        <div>${c ? '<span style="font-weight:400;color:#cfe">✓</span>' : ''}</div>
                        <div class="n">${name}</div><div class="num">${num}</div><div class="g">${g}</div>
                    </div>`).join('')}</div>
                <div class="hs"><i>◄</i><b></b><span></span><i>►</i></div>
            </div>`;
    }
}

class VwStatus extends HTMLElement {
    connectedCallback() {
        this.attachShadow({ mode: 'open' });
        this.shadowRoot.innerHTML = `
            <style>
                :host { display: flex; align-items: center; height: 11px; background: #f0f0f0; padding-left: 2px; white-space: nowrap; font-size: 7px; grid-column: 1 / -1; }
                .msg { width: 694px; flex: none; overflow: hidden; }
                .cell { width: 57px; height: 9px; line-height: 9px; background: #f6f6f6; border: 1px solid #e4e4e4; border-width: 1px 1px 0; box-sizing: border-box; margin-right: 3.500px; padding-left: 1px; flex: none; font-size: 7.600px; }
                .key { color: #aaa; flex: none; padding-right: 1px; font-size: 6.800px; }
                i { border: 2px solid transparent; border-left: 3px solid #111; border-right: 0; margin-left: 5px; }
            </style>
            <div class="msg"><slot></slot></div>
            <div class="cell">x: 1.000m</div><div class="cell">y: 7.790m</div><div class="cell">L: 7.854m</div><div class="cell">W 82.685°</div>
            <span class="key">CAP</span><span class="key">NUM</span><span class="key">SCRL</span><i></i>`;
    }
}

class VwApp extends HTMLElement {
    connectedCallback() {
        this.attachShadow({ mode: 'open' });
        this.shadowRoot.innerHTML = `
            <style>
                :host { display: grid; grid-template-columns: 72px 773px 155px; grid-template-rows: 473px 11px; width: 1000px; height: 484px; overflow: hidden; filter: blur(.4px); }
                .col { display: flex; flex-direction: column; min-height: 0; min-width: 0; }
                .left { border-right: 1px solid #e4e4e4; width: 72px; }
                .work { display: flex; flex: 1; min-height: 0; }
                .label { margin-left: 6px; flex: none; white-space: nowrap; }
                .push { flex: 1; }
                vw-toolbar vw-more { margin-right: 10px; }
            </style>
            <div class="col left">
                <vw-palette></vw-palette>
                <vw-tool-list></vw-tool-list>
                <vw-attributes></vw-attributes>
            </div>
            <div class="col" style="margin-left:1px;width:772px">
                <vw-toolbar h="15">
                    <vw-tool name="back" w="14"></vw-tool><vw-tool name="fwd" w="15"></vw-tool><vw-tool name="classes" w="12"></vw-tool><vw-gap w="1"></vw-gap>
                    <vw-combo w="61" inner>Keine</vw-combo><vw-gap w="5" sep></vw-gap>
                    <vw-tool name="hex" w="10"></vw-tool><vw-tool name="box" w="12" size="9"></vw-tool><vw-gap w="1"></vw-gap>
                    <vw-combo w="59" inner>Schnitte</vw-combo><vw-gap w="3"></vw-gap>
                    <vw-tool name="align" w="13"></vw-tool><vw-gap w="1"></vw-gap>
                    <vw-combo w="48">Ausrichtung K...</vw-combo><vw-tool drop w="10"></vw-tool><vw-gap w="8" sep></vw-gap>
                    <vw-tool name="doc" w="12" size="10"></vw-tool><vw-tool drop w="10"></vw-tool><vw-gap w="5" sep></vw-gap>
                    <vw-tool name="ruler" w="16"></vw-tool>
                    <vw-combo w="47">1:100</vw-combo><vw-gap w="4" sep></vw-gap>
                    <vw-tool name="clock" w="14" size="10"></vw-tool><vw-tool name="views" w="14" size="10"></vw-tool><vw-tool name="zoom" w="14" size="10"></vw-tool><vw-gap w="3"></vw-gap>
                    <vw-combo w="47" inner>200%</vw-combo><vw-gap w="1"></vw-gap>
                    <vw-tool name="pinkbox" w="13"></vw-tool><vw-tool name="bluelayer" w="14" on></vw-tool><vw-gap w="5"></vw-gap>
                    <vw-combo w="47">2D-Plan Drauf...</vw-combo><vw-tool drop w="13"></vw-tool><vw-gap w="2"></vw-gap>
                    <vw-tool name="axes" w="15"></vw-tool><vw-gap w="2"></vw-gap>
                    <vw-combo w="29">0.000°</vw-combo><vw-gap w="5"></vw-gap>
                    <vw-tool name="grid2" w="14" on></vw-tool><vw-tool name="layout" w="14"></vw-tool><vw-gap w="4"></vw-gap>
                    <vw-combo w="49">2D-Plan</vw-combo><vw-tool drop w="11"></vw-tool><vw-gap w="2"></vw-gap>
                    <vw-tool name="shield" w="14"></vw-tool><vw-tool drop w="11"></vw-tool>
                    <span class="push"></span><vw-more></vw-more>
                </vw-toolbar>
                <vw-toolbar h="17">
                    <vw-gap w="5"></vw-gap><vw-tool name="snapx" w="16"></vw-tool><vw-gap w="1"></vw-gap><vw-tool name="snap2" w="16"></vw-tool><vw-gap w="2"></vw-gap>
                    <vw-tool name="snap3" w="18" on></vw-tool><vw-gap w="3"></vw-gap><vw-tool name="snap4" w="19" on></vw-tool><vw-gap w="3"></vw-gap>
                    <vw-tool name="rect" w="18" on></vw-tool><vw-gap w="3"></vw-gap><vw-tool name="lasso" w="16"></vw-tool><vw-gap w="3"></vw-gap><vw-tool name="poly" w="16"></vw-tool><vw-gap w="4" sep></vw-gap>
                    <vw-tool name="section" w="15" size="12" on></vw-tool>
                    <span class="label">Aktivieren: Auswahl durch Rechteck</span>
                    <span class="push"></span>
                    <vw-tool name="hiddenline" w="15" size="12"></vw-tool><vw-gap w="2"></vw-gap><vw-tool name="gear" w="13" size="12"></vw-tool><vw-tool drop w="11"></vw-tool><vw-gap w="2"></vw-gap>
                    <vw-tool name="shieldg" w="15" size="12"></vw-tool><vw-tool drop w="11"></vw-tool><vw-gap w="1"></vw-gap><vw-tool name="gem" w="15" size="12"></vw-tool><vw-tool drop w="10"></vw-tool><vw-gap w="2"></vw-gap>
                    <vw-tool name="figure" w="18" size="12" on></vw-tool><vw-gap w="1"></vw-gap><vw-tool name="owl" w="15" size="12"></vw-tool><vw-tool drop w="11"></vw-tool><vw-gap w="2"></vw-gap>
                    <vw-tool name="teapot" w="16" size="12"></vw-tool><vw-gap w="2"></vw-gap><vw-tool name="shot" w="18" size="12" on></vw-tool><vw-gap w="1"></vw-gap><vw-tool name="page" w="18" size="12" on></vw-tool><vw-gap w="11"></vw-gap><vw-more></vw-more>
                </vw-toolbar>
                <div class="work"><vw-ruler></vw-ruler><vw-drawing></vw-drawing></div>
            </div>
            <div class="col">
                <vw-object-info></vw-object-info>
                <vw-navigator></vw-navigator>
            </div>
            <vw-status>Drücken Sie die F1-Taste oder klicken auf das ? oben rechts im Dialogfenster, um die Vectorworks-Hilfe aufzurufen.</vw-status>`;
    }
}

customElements.define('vw-tool', VwTool);
customElements.define('vw-combo', VwCombo);
customElements.define('vw-gap', VwGap);
customElements.define('vw-more', VwMore);
customElements.define('vw-toolbar', VwToolbar);
customElements.define('vw-title', VwTitle);
customElements.define('vw-check', VwCheck);
customElements.define('vw-pbutton', VwPButton);
customElements.define('vw-palette', VwPalette);
customElements.define('vw-tool-list', VwToolList);
customElements.define('vw-attributes', VwAttributes);
customElements.define('vw-ruler', VwRuler);
customElements.define('vw-drawing', VwDrawing);
customElements.define('vw-object-info', VwObjectInfo);
customElements.define('vw-navigator', VwNavigator);
customElements.define('vw-status', VwStatus);
customElements.define('vw-app', VwApp);
</script>
</body>
</html>
